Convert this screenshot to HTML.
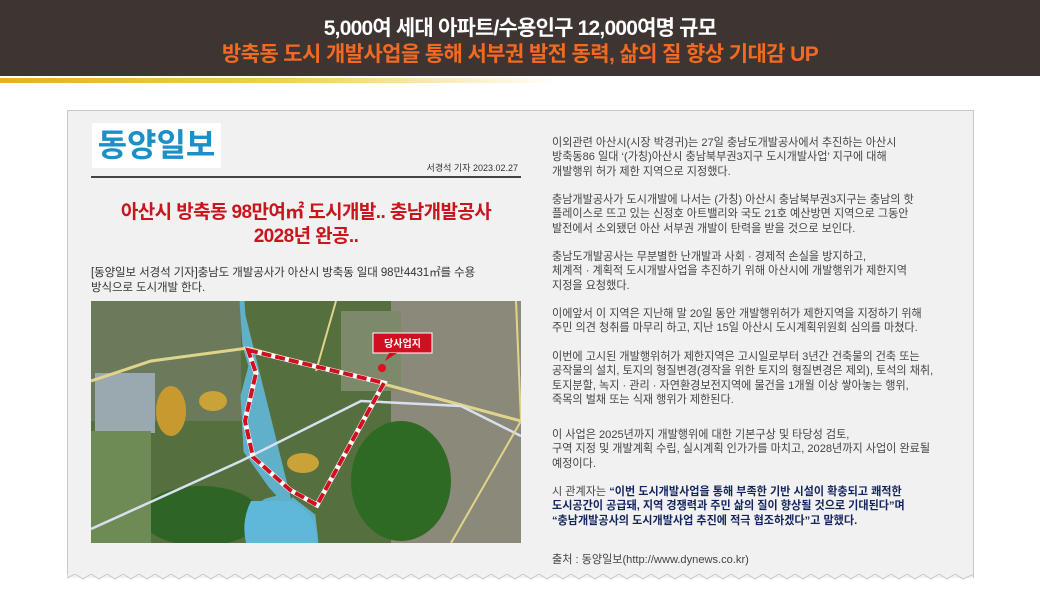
<!DOCTYPE html>
<html><head><meta charset="utf-8"><style>
*{margin:0;padding:0;box-sizing:border-box}
body{width:1040px;height:612px;background:#fff;position:relative;overflow:hidden;font-family:"Liberation Sans","Noto Sans CJK KR",sans-serif}
.hdr{position:absolute;left:0;top:0;width:1040px;height:76px;background:#3e3532;text-align:center;font-weight:bold}
.h1{position:absolute;top:12px;width:100%;color:#fff;font-size:21px;letter-spacing:-0.8px}
.h2{position:absolute;top:38px;width:100%;color:#f26a22;font-size:21px;letter-spacing:-0.6px}
.gold{position:absolute;left:0;top:78px;width:560px;height:5px;background:linear-gradient(90deg,#e6b11c,#f0cf52 50%,rgba(255,240,200,0))}
.paper{position:absolute;left:67px;top:110px;width:907px;height:468px;background:#f1f1f1;border:1px solid #c8c8c8;border-bottom:none}
.logo{position:absolute;left:92px;top:123px;width:129px;height:45px;background:#fff;color:#1a8fc8;font-size:32px;font-weight:bold;text-align:center;line-height:45px;letter-spacing:0px}
.by{position:absolute;left:400px;top:161px;width:118px;text-align:right;font-size:9px;color:#333}
.rule{position:absolute;left:91px;top:176px;width:430px;height:2px;background:#444}
.ttl{position:absolute;left:91px;top:201px;width:430px;text-align:center;color:#c8161d;font-size:19px;font-weight:bold;line-height:24px;letter-spacing:-0.6px}
.lead{position:absolute;left:91px;top:266px;width:440px;font-size:11.5px;color:#333;line-height:15px;letter-spacing:-0.1px}
.map{position:absolute;left:91px;top:301px;width:430px;height:242px}
.col{position:absolute;left:552px;font-size:11.1px;color:#444;line-height:14.3px;letter-spacing:0;width:420px;white-space:nowrap}
.q{color:#12245e;font-weight:bold}
</style></head><body>
<div class="hdr"><div class="h1">5,000여 세대 아파트/수용인구 12,000여명 규모</div><div class="h2">방축동 도시 개발사업을 통해 서부권 발전 동력, 삶의 질 향상 기대감 UP</div></div>
<div class="gold"></div>
<div class="paper"></div>
<svg style="position:absolute;left:67px;top:574px" width="908" height="12"><polyline fill="#f1f1f1" stroke="#c8c8c8" stroke-width="1" points="0,0 0,4 8,0 16,5 24,0 32,5 40,0 48,5 56,0 64,5 72,0 80,5 88,0 96,5 104,0 112,5 120,0 128,5 136,0 144,5 152,0 160,5 168,0 176,5 184,0 192,5 200,0 208,5 216,0 224,5 232,0 240,5 248,0 256,5 264,0 272,5 280,0 288,5 296,0 304,5 312,0 320,5 328,0 336,5 344,0 352,5 360,0 368,5 376,0 384,5 392,0 400,5 408,0 416,5 424,0 432,5 440,0 448,5 456,0 464,5 472,0 480,5 488,0 496,5 504,0 512,5 520,0 528,5 536,0 544,5 552,0 560,5 568,0 576,5 584,0 592,5 600,0 608,5 616,0 624,5 632,0 640,5 648,0 656,5 664,0 672,5 680,0 688,5 696,0 704,5 712,0 720,5 728,0 736,5 744,0 752,5 760,0 768,5 776,0 784,5 792,0 800,5 808,0 816,5 824,0 832,5 840,0 848,5 856,0 864,5 872,0 880,5 888,0 896,5 907,0 907,0"/></svg>
<div class="logo">동양일보</div>
<div class="by">서경석 기자 2023.02.27</div>
<div class="rule"></div>
<div class="ttl">아산시 방축동 98만여㎡ 도시개발.. 충남개발공사<br>2028년 완공..</div>
<div class="lead">[동양일보 서경석 기자]충남도 개발공사가 아산시 방축동 일대 98만4431㎡를 수용<br>방식으로 도시개발 한다.</div>
<svg class="map" viewBox="0 0 430 242">
<rect width="430" height="242" fill="#556f3e"/>
<rect x="0" y="0" width="150" height="120" fill="#6b7a5a"/>
<rect x="4" y="72" width="60" height="60" fill="#9aa8b0"/>
<rect x="300" y="0" width="130" height="242" fill="#8b8a7a"/>
<rect x="250" y="10" width="60" height="80" fill="#7d8a6a"/>
<ellipse cx="310" cy="180" rx="50" ry="60" fill="#2f6a24"/>
<ellipse cx="110" cy="215" rx="60" ry="30" fill="#2e6525"/>
<rect x="0" y="130" width="60" height="112" fill="#6e8a55"/>
<ellipse cx="80" cy="110" rx="15" ry="25" fill="#c79a30"/>
<ellipse cx="122" cy="100" rx="14" ry="10" fill="#c9a238"/>
<ellipse cx="212" cy="162" rx="16" ry="10" fill="#c9a238"/>
<path d="M151 0 L154 45 L160 65 L152 95 L155 150 L180 185 L190 196 L175 200 L160 210 L158 242 L225 242 L222 215 L200 198" fill="#5fb0c8" stroke="#5fb0c8" stroke-width="5"/>
<path d="M160 200 Q150 220 155 242 L225 242 Q230 215 200 200 Z" fill="#5fb8d8"/>
<path d="M0 80 L60 60 L157 47 L300 85 L430 120" stroke="#e0d48a" stroke-width="3" fill="none"/>
<path d="M0 228 L150 160 L270 100 L370 105 L430 135" stroke="#d8e0f0" stroke-width="2.5" fill="none"/>
<path d="M245 0 L225 70 M425 0 L430 120 L360 242" stroke="#e0d48a" stroke-width="2" fill="none"/>
<polygon points="157,49 293,82 226,204 199,189 162,156 154,120 165,72" fill="none" stroke="#fff" stroke-width="5"/>
<polygon points="157,49 293,82 226,204 199,189 162,156 154,120 165,72" fill="none" stroke="#d01020" stroke-width="4" stroke-dasharray="10 4"/>
<rect x="282" y="32" width="59" height="20" fill="#d01020" stroke="#fff" stroke-width="1"/>
<path d="M298 52 L294 60 L306 52 Z" fill="#d01020"/>
<text x="311.5" y="46" font-size="10" font-weight="bold" fill="#fff" text-anchor="middle" font-family="Liberation Sans,Noto Sans CJK KR,sans-serif">당사업지</text>
<circle cx="291" cy="67" r="4" fill="#e01020"/>
</svg>
<div class="col" style="top:136px">이외관련 아산시(시장 박경귀)는 27일 충남도개발공사에서 추진하는 아산시<br>방축동86 일대 ‘(가칭)아산시 충남북부권3지구 도시개발사업’ 지구에 대해<br>개발행위 허가 제한 지역으로 지정했다.</div>
<div class="col" style="top:193px">충남개발공사가 도시개발에 나서는 (가칭) 아산시 충남북부권3지구는 충남의 핫<br>플레이스로 뜨고 있는 신정호 아트밸리와 국도 21호 예산방면 지역으로 그동안<br>발전에서 소외됐던 아산 서부권 개발이 탄력을 받을 것으로 보인다.</div>
<div class="col" style="top:250px">충남도개발공사는 무분별한 난개발과 사회 · 경제적 손실을 방지하고,<br>체계적 · 계획적 도시개발사업을 추진하기 위해 아산시에 개발행위가 제한지역<br>지정을 요청했다.</div>
<div class="col" style="top:307px">이에앞서 이 지역은 지난해 말 20일 동안 개발행위허가 제한지역을 지정하기 위해<br>주민 의견 청취를 마무리 하고, 지난 15일 아산시 도시계획위원회 심의를 마쳤다.</div>
<div class="col" style="top:350px">이번에 고시된 개발행위허가 제한지역은 고시일로부터 3년간 건축물의 건축 또는<br>공작물의 설치, 토지의 형질변경(경작을 위한 토지의 형질변경은 제외), 토석의 채취,<br>토지분할, 녹지 · 관리 · 자연환경보전지역에 물건을 1개월 이상 쌓아놓는 행위,<br>죽목의 벌채 또는 식재 행위가 제한된다.</div>
<div class="col" style="top:428px">이 사업은 2025년까지 개발행위에 대한 기본구상 및 타당성 검토,<br>구역 지정 및 개발계획 수립, 실시계획 인가가를 마치고, 2028년까지 사업이 완료될<br>예정이다.</div>
<div class="col" style="top:485px">시 관계자는 <span class="q">“이번 도시개발사업을 통해 부족한 기반 시설이 확충되고 쾌적한<br>도시공간이 공급돼, 지역 경쟁력과 주민 삶의 질이 향상될 것으로 기대된다”며<br>“충남개발공사의 도시개발사업 추진에 적극 협조하겠다”고 말했다.</span></div>
<div class="col" style="top:553px">출처 : 동양일보(http://www.dynews.co.kr)</div>
</body></html>
